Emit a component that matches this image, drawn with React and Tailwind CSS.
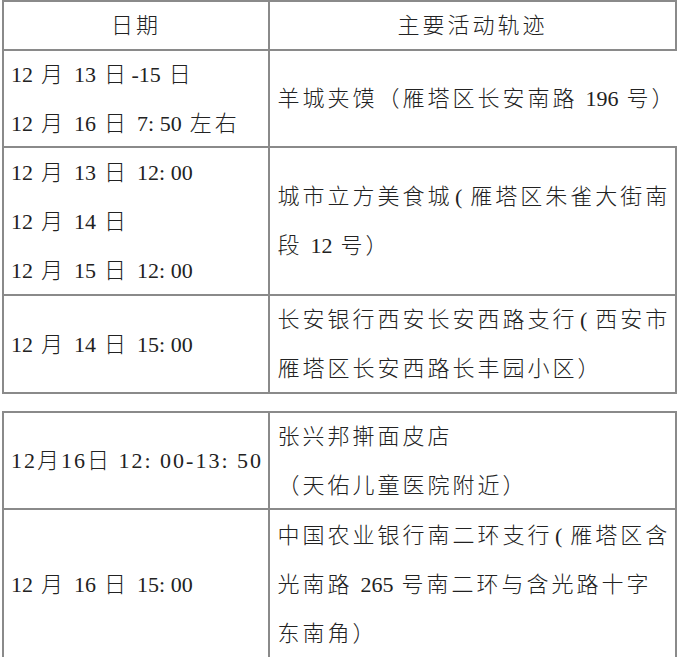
import React from "react";

const CJK = /[\u3000-\u9fff\uff00-\uffef]/;

function T({ s, all }) {
  if (all) {
    return <span className="tracking-[2px]">{s}</span>;
  }
  const parts = s.split(/([\u3000-\u9fff\uff00-\uffef]+)/).filter((p) => p !== "");
  return (
    <>
      {parts.map((p, i) =>
        CJK.test(p) ? (
          <span key={i} className="tracking-[3px] px-[2.5px]">
            {p}
          </span>
        ) : (
          <span key={i}>{p}</span>
        )
      )}
    </>
  );
}

function Cell({ lines, center, last, all }) {
  return (
    <div
      className={`${
        last ? "flex-1 pl-[5px]" : "w-[266px] shrink-0 pl-[7px]"
      } border-r-2 border-b-2 border-[#8a8a8a] flex flex-col justify-center ${
        center ? "items-center !pl-0" : ""
      }`}
    >
      {lines.map((l, i) => (
        <div key={i} className="leading-[49px] whitespace-pre">
          <T s={l} all={all} />
        </div>
      ))}
    </div>
  );
}

function Row({ h, left, right, center, allLeft }) {
  return (
    <div className="flex" style={{ height: h }}>
      <Cell lines={left} center={center} all={allLeft} />
      <Cell lines={right} center={center} last />
    </div>
  );
}

export default function App() {
  return (
    <div
      className="w-[677px] h-[657px] overflow-hidden bg-white pl-[2px] text-[22px] font-light text-[#222]"
      style={{ fontFamily: '"Liberation Serif", "Noto Sans CJK SC", serif' }}
    >
      <div className="border-t-2 border-l-2 border-[#8a8a8a]">
        <Row h={49} center left={["日期"]} right={["主要活动轨迹"]} />
        <Row
          h={97}
          left={["12 月 13 日-15 日", "12 月 16 日 7: 50 左右"]}
          right={["羊城夹馍（雁塔区长安南路 196 号）"]}
        />
        <Row
          h={148}
          left={["12 月 13 日 12: 00", "12 月 14 日", "12 月 15 日 12: 00"]}
          right={["城市立方美食城( 雁塔区朱雀大街南", "段 12 号）"]}
        />
        <Row
          h={98}
          left={["12 月 14 日 15: 00"]}
          right={["长安银行西安长安西路支行( 西安市", "雁塔区长安西路长丰园小区）"]}
        />
      </div>
      <div className="mt-[17px] border-t-2 border-l-2 border-[#8a8a8a]">
        <Row
          h={97}
          allLeft
          left={["12月16日 12: 00-13: 50"]}
          right={["张兴邦搟面皮店", "（天佑儿童医院附近）"]}
        />
        <Row
          h={150}
          left={["12 月 16 日 15: 00"]}
          right={[
            "中国农业银行南二环支行( 雁塔区含",
            "光南路 265 号南二环与含光路十字",
            "东南角）",
          ]}
        />
      </div>
    </div>
  );
}
